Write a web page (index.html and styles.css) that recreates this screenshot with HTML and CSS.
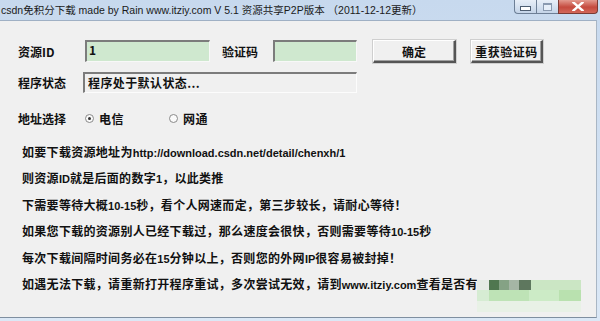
FILE: index.html
```html
<!DOCTYPE html>
<html lang="zh-CN">
<head>
<meta charset="utf-8">
<title>csdn免积分下载</title>
<link rel="stylesheet" href="styles.css">
</head>
<body>
<div class="window">
  <div class="titlebar">
    <span class="title">csdn免积分下载 made by Rain www.itziy.com V 5.1 资源共享P2P版本 （2011-12-12更新）</span>
    <div class="controls">
      <span class="ctl min"><i class="min-glyph"></i></span>
      <span class="ctl max"><i class="max-glyph"></i></span>
      <span class="ctl close"><svg width="12" height="9" viewBox="0 0 12 9"><path d="M1.5 0.5 L10.5 8.5 M10.5 0.5 L1.5 8.5" stroke="#fff" stroke-width="2.4" stroke-linecap="square"/></svg></span>
    </div>
  </div>
  <div class="frame">
    <div class="client">
      <div class="row row1">
        <span class="label l-id">资源ID</span>
        <span class="input in-id">1</span>
        <span class="label l-code">验证码</span>
        <span class="input in-code"></span>
        <span class="btn b-ok">确定</span>
        <span class="btn b-re">重获验证码</span>
      </div>
      <div class="row row2">
        <span class="label l-state">程序状态</span>
        <span class="status">程序处于默认状态...</span>
      </div>
      <div class="row row3">
        <span class="label l-addr">地址选择</span>
        <span class="radio on"></span><span class="rlabel r1">电信</span>
        <span class="radio"></span><span class="rlabel">网通</span>
      </div>
      <div class="notes">
        <p>如要下载资源地址为<span class="en">http://download.csdn.net/detail/chenxh/1</span></p>
        <p>则资源<span class="en">ID</span>就是后面的数字<span class="en">1</span>，以此类推</p>
        <p>下需要等待大概<span class="en">10-15</span>秒，看个人网速而定，第三步较长，请耐心等待！</p>
        <p>如果您下载的资源别人已经下载过，那么速度会很快，否则需要等待<span class="en">10-15</span>秒</p>
        <p>每次下载间隔时间务必在<span class="en">15</span>分钟以上，否则您的外网<span class="en">IP</span>很容易被封掉！</p>
        <p>如遇无法下载，请重新打开程序重试，多次尝试无效，请到<span class="en">www.itziy.com</span>查看是否有</p>
      </div>
      <div class="mark">
        <i style="left:0;top:0;width:12px;height:10px;background:#e4ebe4"></i>
        <i style="left:12px;top:0;width:10px;height:10px;background:#3f6a3f"></i>
        <i style="left:22px;top:0;width:10px;height:10px;background:#7a9a7a"></i>
        <i style="left:32px;top:0;width:10px;height:10px;background:#9db09d"></i>
        <i style="left:42px;top:0;width:12px;height:10px;background:#4f6a4f"></i>
        <i style="left:54px;top:0;width:50px;height:10px;background:#c7e6c0"></i>
        <i style="left:0;top:10px;width:12px;height:11px;background:#d4ecd0"></i>
        <i style="left:12px;top:10px;width:40px;height:11px;background:#b9e2b0"></i>
        <i style="left:52px;top:10px;width:30px;height:11px;background:#c9ebc2"></i>
        <i style="left:82px;top:10px;width:22px;height:11px;background:#b4e0a9"></i>
        <i style="left:0;top:21px;width:104px;height:11px;background:#e8f2e6"></i>
      </div>
    </div>
  </div>
</div>
</body>
</html>
```
FILE: styles.css
```css
html, body {
  margin: 0;
  padding: 0;
  width: 600px;
  height: 321px;
  overflow: hidden;
  background: #d6e4f3;
}
.window {
  width: 600px;
  height: 321px;
  display: flex;
  flex-direction: column;
  background: linear-gradient(#c7d9ee, #dbe8f6);
}
.titlebar {
  height: 20px;
  display: flex;
  align-items: flex-start;
}
.title {
  font-family: "Liberation Sans", "Noto Sans CJK SC", sans-serif;
  font-size: 10.5px;
  line-height: 20px;
  color: #1a1a1a;
  padding-left: 1px;
  white-space: nowrap;
}
.controls {
  margin-left: auto;
  margin-right: 2px;
  display: flex;
  height: 14px;
}
.ctl {
  display: flex;
  align-items: center;
  justify-content: center;
  height: 13px;
  border: 1px solid #6d7f96;
  border-top: none;
  box-sizing: content-box;
}
.min {
  width: 21px;
  border-radius: 0 0 0 4px;
  background: linear-gradient(#e8eff8, #c4d4e8);
  border-right: none;
}
.max {
  width: 21px;
  background: linear-gradient(#e8eff8, #c4d4e8);
  border-right: none;
}
.close {
  width: 38px;
  border-radius: 0 0 4px 0;
  background: linear-gradient(#e39a8f, #c54a3e 55%, #d2675a);
  border-color: #7a3a34;
}
.min-glyph {
  display: block;
  width: 9px;
  height: 3px;
  margin-top: 4px;
  background: #fff;
  border: 1px solid #4e5e72;
}
.max-glyph {
  display: block;
  width: 7px;
  height: 5px;
  border: 1px solid #8a9ab0;
  border-top-width: 2px;
  background: #e6eef8;
}
.frame {
  flex: 1;
  display: flex;
  padding: 0 3px 3px 0;
}
.client {
  flex: 1;
  position: relative;
  background: #f0f0f0;
  border-top: 1px solid #9fb0c4;
  border-right: 1px solid #a9b6c4;
  border-bottom: 1px solid #7f8fa0;
  font-family: "Noto Sans CJK SC", "Noto Sans", sans-serif;
  font-size: 12px;
  font-weight: 700;
  color: #111;
  padding: 19px 0 0 18px;
}
.row {
  display: flex;
  align-items: center;
}
.row1 { height: 23px; }
.label { white-space: nowrap; }
.l-id { width: 67px; }
.l-code { width: 51px; margin-left: 12px; }
.input {
  box-sizing: border-box;
  height: 22px;
  background: #cfe8cf;
  border-top: 2px solid #7c7c7c;
  border-left: 2px solid #7c7c7c;
  border-bottom: 1px solid #f8f8f8;
  border-right: 1px solid #f8f8f8;
  font-weight: 700;
  padding: 0 0 0 2px;
  line-height: 16px;
  align-self: flex-start;
}
.in-id { width: 125px; }
.in-code { width: 84px; }
.btn {
  box-sizing: border-box;
  height: 23px;
  display: flex;
  align-items: center;
  justify-content: center;
  background: #f0f0f0;
  border-top: 1px solid #fff;
  border-left: 1px solid #fff;
  border-right: 2px solid #555;
  border-bottom: 2px solid #555;
  box-shadow: inset -1px -1px 0 #a0a0a0, 0 0 0 1px #cfcfcf;
}
.b-ok { width: 83px; margin-left: 16px; }
.b-re { width: 72px; margin-left: 15px; letter-spacing: 0.5px; }
.row2 {
  margin-top: 9px;
  height: 21px;
}
.l-state { width: 65px; }
.status {
  box-sizing: border-box;
  width: 274px;
  height: 21px;
  border-top: 2px solid #7c7c7c;
  border-left: 2px solid #7c7c7c;
  border-bottom: 1px solid #fcfcfc;
  border-right: 1px solid #fcfcfc;
  padding-left: 3px;
  line-height: 17px;
  letter-spacing: 0.4px;
}
.row3 {
  margin-top: 15px;
  height: 20px;
}
.l-addr { width: 67px; }
.radio {
  box-sizing: border-box;
  width: 9px;
  height: 9px;
  border-radius: 50%;
  border: 1px solid #8a8a8a;
  background: #fafafa;
  position: relative;
}
.radio.on::after {
  content: "";
  position: absolute;
  left: 2px;
  top: 2px;
  width: 3px;
  height: 3px;
  border-radius: 50%;
  background: #333;
}
.rlabel { margin-left: 5px; letter-spacing: 0.5px; }
.r1 { width: 70px; }
.notes {
  margin-top: 12px;
  padding-left: 4px;
  font-family: "Liberation Sans", "Noto Sans CJK SC", sans-serif;
}
.notes p {
  margin: 0;
  height: 26.4px;
  line-height: 26.4px;
  white-space: nowrap;
  letter-spacing: 0.3px;
}
.notes .en {
  font-size: 11px;
  letter-spacing: 0;
}
.mark {
  position: absolute;
  left: 477px;
  top: 259px;
  width: 104px;
  height: 32px;
  opacity: 0.9;
}
.mark i {
  position: absolute;
  display: block;
}
```
